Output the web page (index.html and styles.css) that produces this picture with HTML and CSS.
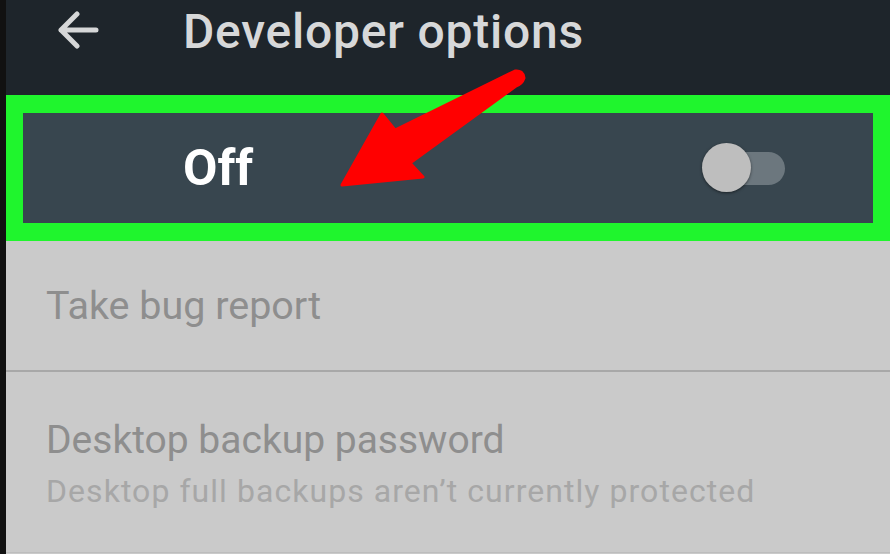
FILE: index.html
```html
<!DOCTYPE html>
<html>
<head>
<meta charset="utf-8">
<link rel="stylesheet" href="styles.css">
</head>
<body>
<div class="page">
  <div class="strip"></div>
  <div class="screen">
    <header class="appbar">
      <svg class="back" width="44" height="44" viewBox="0 0 44 44">
        <path d="M39 19 H4 M20 3 L4 19 L20 35" fill="none" stroke="#d6d7d8" stroke-width="5" stroke-linecap="round" stroke-linejoin="round"/>
      </svg>
      <h1 class="title">Developer options</h1>
    </header>
    <section class="highlight">
      <div class="master">
        <span class="master-label">Off</span>
        <div class="switch">
          <div class="track"></div>
          <div class="thumb"></div>
        </div>
      </div>
    </section>
    <div class="item item-single">
      <span class="item-title">Take bug report</span>
    </div>
    <div class="item item-double">
      <div class="item-title">Desktop backup password</div>
      <div class="item-sub">Desktop full backups aren’t currently protected</div>
    </div>
  </div>
  <svg class="callout" width="890" height="554" viewBox="0 0 890 554">
    <path d="M342 185 L382 114 L395 130 L515 71 Q523 70 524 78 Q522 84 516 86 L410 163 L423 177 Z" fill="#ff0000" stroke="#ff0000" stroke-width="3" stroke-linejoin="round"/>
  </svg>
</div>
</body>
</html>
```
FILE: styles.css
```css
html, body {
  margin: 0;
  padding: 0;
  background: #111111;
}
.page {
  position: relative;
  width: 890px;
  height: 554px;
  display: flex;
  overflow: hidden;
  font-family: Roboto, "Liberation Sans", sans-serif;
}
.strip {
  width: 6px;
  background: #111111;
  flex: none;
}
.screen {
  flex: 1;
  display: flex;
  flex-direction: column;
  background: #cacaca;
}
.appbar {
  height: 95px;
  background: #1e252b;
  display: flex;
  align-items: flex-start;
  flex: none;
}
.back {
  margin-left: 51px;
  margin-top: 11px;
  flex: none;
}
.title {
  margin: 8px 0 0 82px;
  font-size: 48px;
  letter-spacing: 0.75px;
  line-height: 1;
  font-weight: 500;
  color: #d7d8d9;
}
.highlight {
  background: #1ff52d;
  padding: 18px 17px;
  flex: none;
}
.master {
  height: 110px;
  background: #38464f;
  display: flex;
  align-items: center;
  justify-content: space-between;
  padding: 0 88px 0 160px;
}
.master-label {
  font-size: 50px;
  line-height: 1;
  font-weight: 700;
  color: #ffffff;
}
.switch {
  position: relative;
  width: 83px;
  height: 50px;
  display: flex;
  align-items: center;
  justify-content: flex-end;
}
.track {
  width: 70px;
  height: 33px;
  border-radius: 17px;
  background: #6c777e;
}
.thumb {
  position: absolute;
  left: 0;
  top: 0;
  width: 49px;
  height: 49px;
  border-radius: 50%;
  background: #bebebe;
  box-shadow: 0 1px 3px rgba(0,0,0,0.5);
}
.item {
  padding-left: 40px;
  flex: none;
}
.item-single {
  height: 129px;
  display: flex;
  align-items: center;
  border-bottom: 2px solid #a8a8a8;
}
.item-single .item-title {
  font-size: 39.5px;
  line-height: 1;
  color: #8e8e8e;
}
.item-double {
  padding-top: 49px;
  height: 131px;
  border-bottom: 1px solid #bdbdbd;
}
.item-double .item-title {
  font-size: 39px;
  line-height: 1;
  color: #8e8e8e;
}
.item-sub {
  margin-top: 15px;
  font-size: 32px;
  letter-spacing: 1.05px;
  line-height: 1;
  color: #a7a7a7;
}
.callout {
  position: absolute;
  left: 0;
  top: 0;
  pointer-events: none;
}
```
